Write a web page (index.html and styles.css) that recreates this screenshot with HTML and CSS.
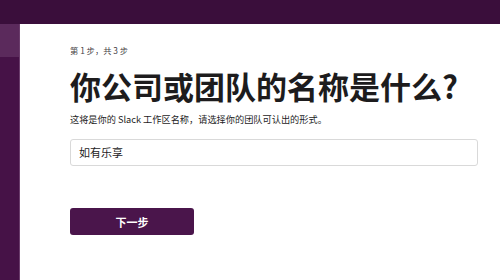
FILE: index.html
```html
<!DOCTYPE html>
<html lang="zh-CN">
<head>
<meta charset="utf-8">
<link rel="stylesheet" href="styles.css">
</head>
<body>
<div class="app">
  <div class="topbar"></div>
  <div class="body">
    <div class="sidebar">
      <div class="side-active"></div>
    </div>
    <main class="main">
      <div class="step">第 1 步，共 3 步</div>
      <h1 class="title">你公司或团队的名称是什么?</h1>
      <p class="desc">这将是你的 Slack 工作区名称，请选择你的团队可认出的形式。</p>
      <div class="field">如有乐享</div>
      <button class="next">下一步</button>
    </main>
  </div>
</div>
</body>
</html>
```
FILE: styles.css
```css
html, body {
  margin: 0;
  padding: 0;
}
body {
  width: 500px;
  height: 280px;
  overflow: hidden;
  font-family: "Noto Sans CJK SC", "Noto Sans", sans-serif;
  background: #4a154b;
}
.app {
  display: flex;
  flex-direction: column;
  height: 280px;
}
.topbar {
  height: 24px;
  background: #3a0e3b;
  flex: none;
}
.body {
  display: flex;
  flex: 1;
}
.sidebar {
  width: 19px;
  flex: none;
  background: #461247;
  border-right: 1px solid #6b3d6c;
}
.side-active {
  height: 33px;
  background: #5b2a5c;
}
.main {
  flex: 1;
  background: #ffffff;
  padding: 20px 22px 0 50px;
  display: flex;
  flex-direction: column;
  align-items: flex-start;
}
.step {
  font-size: 8.3px;
  line-height: 12px;
  color: #454245;
}
.title {
  margin: 12px 0 0;
  font-size: 31px;
  line-height: 36px;
  font-weight: 700;
  color: #1d1c1d;
  letter-spacing: 0;
}
.desc {
  margin: 8px 0 0;
  font-size: 9.2px;
  line-height: 14px;
  color: #1d1c1d;
}
.field {
  margin-top: 13px;
  align-self: stretch;
  height: 27px;
  box-sizing: border-box;
  border: 1px solid #d9d9d9;
  border-radius: 3px;
  padding: 0 8px;
  font-size: 11px;
  line-height: 25px;
  color: #1d1c1d;
}
.next {
  margin-top: 42px;
  width: 124px;
  height: 27px;
  border: none;
  border-radius: 3px;
  background: #4a154b;
  color: #ffffff;
  font-family: "Noto Sans CJK SC", sans-serif;
  font-size: 11px;
  font-weight: 700;
  padding: 0;
}
```
